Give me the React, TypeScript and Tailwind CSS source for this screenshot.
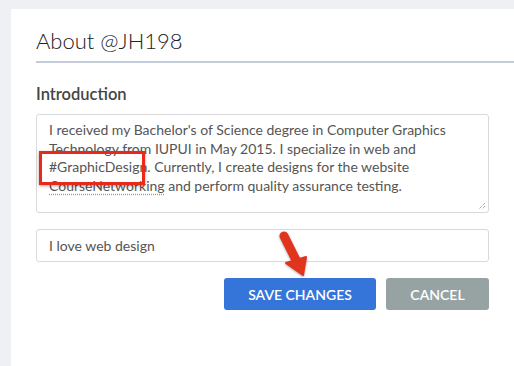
import {useState} from 'react';

function RedArrow() {
  return (
    <svg
      className="absolute left-[276px] top-[228px] pointer-events-none"
      width="40"
      height="56"
      viewBox="0 0 40 56"
      style={{filter: 'drop-shadow(0 1px 1px rgba(0,0,0,0.35))'}}
    >
      <path d="M8 8 L20 32" stroke="#e2331c" strokeWidth="9" strokeLinecap="round" fill="none" />
      <path d="M10 35 L30 29 L27 47 Z" fill="#e2331c" stroke="#e2331c" strokeWidth="2" strokeLinejoin="round" />
    </svg>
  );
}

export default function App() {
  const [intro, setIntro] = useState('I love web design');

  return (
    <div className="relative min-h-[366px] bg-[#eef0f4] pl-[11px] pt-[9px] font-['Lato','Liberation_Sans',sans-serif]">
      <div className="min-h-[357px] bg-white pl-[25px]">
        <div className="border-b-2 border-[#c3ccd9] pt-[16px] pb-[5px]">
          <h1 className="text-[22px] leading-[31px] font-light text-[#222]">About @JH198</h1>
        </div>

        <div className="pr-[25px]">
          <h2 className="mt-[19px] text-[16.5px] leading-[24px] font-semibold text-[#444]">Introduction</h2>

          <div className="relative mt-[8px] h-[99px] rounded-[3px] border border-[#d9d9d9] px-[12px] pt-[6px] text-[14px] leading-[18.7px] text-[#555]">
            <p>
              I received my Bachelor's of Science degree in Computer Graphics Technology from IUPUI in May 2015. I specialize in web and
              #GraphicDesign. Currently, I create designs for the website{' '}
              <span className="underline decoration-dotted decoration-[#999] underline-offset-[3px]">CourseNetworking</span> and perform quality
              assurance testing.
            </p>
            <div className="absolute left-[2px] top-[36px] h-[34px] w-[106px] border-[3px] border-[#e8291c] shadow-[0_1px_3px_rgba(0,0,0,0.35)]" />
            <svg className="absolute right-[2px] bottom-[2px]" width="8" height="8" viewBox="0 0 8 8">
              <path d="M7 1 L1 7 M7 4 L4 7" stroke="#888" strokeWidth="1" strokeDasharray="1 1" />
            </svg>
          </div>

          <input
            value={intro}
            onChange={(e) => setIntro(e.target.value)}
            className="mt-[16px] block h-[33px] w-full rounded-[3px] border border-[#d9d9d9] px-[12px] text-[14px] text-[#555] outline-none"
          />

          <div className="mt-[16px] flex justify-end gap-[10px]">
            <button className="h-[32px] w-[152px] rounded-[3px] bg-[#3574d8] text-[14px] font-semibold text-white">SAVE CHANGES</button>
            <button className="h-[32px] w-[103px] rounded-[3px] bg-[#96a3a2] text-[14px] font-semibold text-white">CANCEL</button>
          </div>
        </div>
      </div>
      <RedArrow />
    </div>
  );
}
